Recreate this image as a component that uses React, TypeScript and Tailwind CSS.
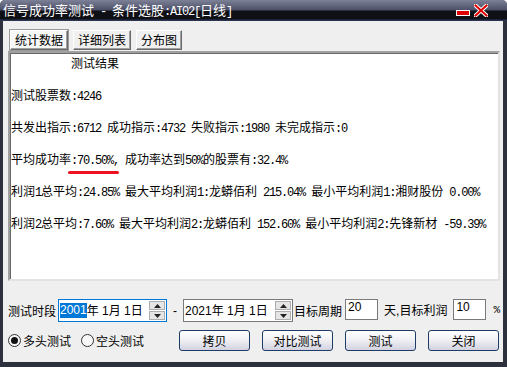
import React from "react";

function T({ s, mono = true }: { s: string; mono?: boolean }) {
  const parts = s.split(/([\x20-\x7e]+)/).filter((p) => p.length > 0);
  return (
    <>
      {parts.map((p, i) =>
        /[\x20-\x7e]/.test(p) ? (
          mono ? (
            <span key={i} className="font-['Liberation_Mono'] text-[12px] tracking-[-1.2px] whitespace-pre">
              {p}
            </span>
          ) : (
            <span key={i} className="font-['Liberation_Sans'] whitespace-pre">
              {p}
            </span>
          )
        ) : (
          <span key={i}>{p}</span>
        )
      )}
    </>
  );
}

function Spinner() {
  return (
    <div className="flex flex-col w-[16px] h-[19px] gap-[1px]">
      <div className="flex-1 bg-[#e5e5e5] border border-[#adadad] flex items-center justify-center">
        <svg width="7" height="4" viewBox="0 0 7 4">
          <path d="M3.5 0 L7 4 L0 4 Z" fill="#222" />
        </svg>
      </div>
      <div className="flex-1 bg-[#e5e5e5] border border-[#adadad] flex items-center justify-center">
        <svg width="7" height="4" viewBox="0 0 7 4">
          <path d="M0 0 L7 0 L3.5 4 Z" fill="#222" />
        </svg>
      </div>
    </div>
  );
}

function Tab({ label, active, w }: { label: string; active?: boolean; w: string }) {
  return (
    <div
      className={
        "h-[20px] flex items-center justify-center border border-t-white border-l-white border-r-[#696969] border-b-[#696969] shadow-[inset_-1px_-1px_0_#a0a0a0] " +
        w +
        (active ? " bg-[#f7f7f7] outline outline-1 outline-[#9a9a9a]" : " bg-[#f0f0f0]")
      }
    >
      <span>{label}</span>
    </div>
  );
}

function Btn({ label }: { label: string }) {
  return (
    <div className="w-[71px] h-[21px] rounded-[3px] border border-[#1d3d66] bg-[linear-gradient(to_bottom,#ffffff,#f1f1f5_45%,#d3d3e1)] flex items-center justify-center text-[12px] text-black">
      {label}
    </div>
  );
}

function Radio({ label, checked }: { label: string; checked?: boolean }) {
  return (
    <div className="flex items-center gap-[2px]">
      <div className="w-[13px] h-[13px] rounded-full border border-[#333] bg-[#f7f7f7] flex items-center justify-center">
        {checked && <div className="w-[7px] h-[7px] rounded-full bg-[#111]" />}
      </div>
      <span>{label}</span>
    </div>
  );
}

export default function App() {
  return (
    <div className="w-[507px] h-[367px] bg-white overflow-hidden">
      <div className="w-[507px] h-[367px] bg-[#2d303d] rounded-t-[5px] flex flex-col overflow-hidden font-['Noto_Sans_CJK_SC',sans-serif] text-[12px] text-black">
        {/* title bar */}
        <div className="h-[21px] shrink-0 bg-[linear-gradient(to_bottom,#7d8197_0px,#4b4f67_10px,#0f0f16_11px,#0f0f16_19px,#2a3452_20px)] flex items-center pl-[3px] pr-[19px] relative">
          <div className="text-white text-[13px] leading-[20px] whitespace-nowrap">
            <T s="信号成功率测试 - 条件选股:AI02[日线]" />
          </div>
          <div className="ml-auto flex items-end gap-[4px] pb-[1px]">
            <svg width="14" height="6" viewBox="0 0 14 6" className="mb-[1px]">
              <rect x="0.5" y="0.5" width="13" height="5" fill="#e00000" stroke="#fff" strokeWidth="1" />
            </svg>
            <svg width="14" height="13" viewBox="0 0 14 13">
              <path d="M1.5 1.5 L12.5 11.5 M12.5 1.5 L1.5 11.5" stroke="#fff" strokeWidth="4" strokeLinecap="square" />
              <path d="M1.5 1.5 L12.5 11.5 M12.5 1.5 L1.5 11.5" stroke="#e00000" strokeWidth="2" strokeLinecap="square" />
            </svg>
          </div>
        </div>

        {/* body */}
        <div className="flex-1 ml-[3px] mr-[4px] mb-[5px] bg-[#efefef] flex flex-col">
          {/* tabs */}
          <div className="flex gap-[5px] pl-[7px] pt-[9px]">
            <Tab label="统计数据" active w="w-[58px]" />
            <Tab label="详细列表" w="w-[58px]" />
            <Tab label="分布图" w="w-[46px]" />
          </div>

          {/* result area */}
          <div className="ml-[5px] mr-[3px] mt-[1px] h-[230px] bg-white border-2 border-t-[#a0a0a0] border-l-[#a0a0a0] border-r-[#e3e3e3] border-b-[#e3e3e3] shadow-[inset_1px_1px_0_#696969] pl-[1px] flex flex-col gap-[12px] leading-[20px]">
            <div className="h-[20px] pl-[60px]">测试结果</div>
            <div className="h-[20px]"><T s="测试股票数:4246" /></div>
            <div className="h-[20px]"><T s="共发出指示:6712 成功指示:4732 失败指示:1980 未完成指示:0" /></div>
            <div className="h-[20px] relative">
              <T s="平均成功率:70.50%, 成功率达到50%的股票有:32.4%" />
              <div className="absolute left-[57px] top-[22px] w-[51px] h-[3px] rounded-full bg-[#ee1122]" />
            </div>
            <div className="h-[20px] whitespace-nowrap"><T s="利润1总平均:24.85% 最大平均利润1:龙蟒佰利 215.04% 最小平均利润1:湘财股份 0.00%" /></div>
            <div className="h-[20px] whitespace-nowrap"><T s="利润2总平均:7.60% 最大平均利润2:龙蟒佰利 152.60% 最小平均利润2:先锋新材 -59.39%" /></div>
          </div>

          {/* row 1 */}
          <div className="flex items-center mt-[18px] pl-[5px] h-[23px] whitespace-nowrap">
            <span>测试时段</span>
            <div className="ml-[2px] w-[109px] h-[23px] bg-white border border-[#0078d7] flex items-center pl-[1px] pr-[1px]">
              <span className="bg-[#0078d7] text-white font-['Liberation_Sans'] leading-[15px]">2001</span>
              <span><T s="年 1月 1日" mono={false} /></span>
              <div className="ml-auto"><Spinner /></div>
            </div>
            <span className="mx-[6px] font-['Liberation_Sans']">-</span>
            <div className="w-[110px] h-[23px] bg-white border border-[#7a7a7a] flex items-center pl-[1px] pr-[1px]">
              <span><T s="2021年 1月 1日" mono={false} /></span>
              <div className="ml-auto"><Spinner /></div>
            </div>
            <span className="ml-[1px]">目标周期</span>
            <div className="ml-[3px] w-[33px] h-[21px] bg-white border border-[#7a7a7a] pl-[2px] leading-[15px] font-['Liberation_Sans'] self-start">20</div>
            <span className="ml-[6px]"><T s="天,目标利润" mono={false} /></span>
            <div className="ml-[6px] w-[33px] h-[21px] bg-white border border-[#7a7a7a] pl-[2px] leading-[15px] font-['Liberation_Sans'] self-start">10</div>
            <span className="ml-[7px] font-['Liberation_Mono'] text-[11px]">%</span>
          </div>

          {/* row 2 */}
          <div className="flex items-center mt-[8px] pl-[5px] h-[21px] whitespace-nowrap">
            <Radio label="多头测试" checked />
            <div className="ml-[10px]"><Radio label="空头测试" /></div>
            <div className="ml-[35px] flex gap-[12px]">
              <Btn label="拷贝" />
              <Btn label="对比测试" />
              <Btn label="测试" />
              <Btn label="关闭" />
            </div>
          </div>
        </div>
      </div>
    </div>
  );
}
